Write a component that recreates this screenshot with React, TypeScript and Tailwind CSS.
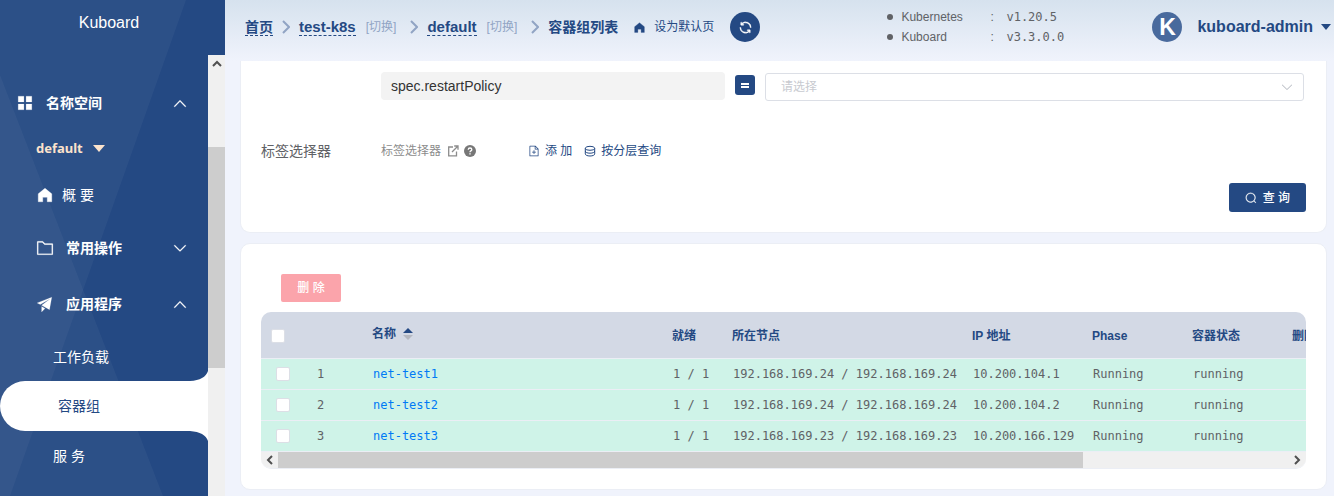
import React from "react";

const sans = "font-['Liberation_Sans','Noto_Sans_CJK_SC',sans-serif]";
const mono = "font-['DejaVu_Sans_Mono','Noto_Sans_CJK_SC',monospace]";

type IconProps = { d: string; className: string };

function Icon({ d, className }: IconProps) {
  return (
    <svg viewBox="0 0 1024 1024" fill="currentColor" aria-hidden="true" className={className}>
      <path d={d} />
    </svg>
  );
}

const paths = {
  home: "M512 128 128 447.936V896h255.936V640H640v256h255.936V447.936z",
  up: "m488.832 344.32-339.84 356.672a32 32 0 0 0 0 44.16l.384.384a29.44 29.44 0 0 0 42.688 0l320-335.872 319.872 335.872a29.44 29.44 0 0 0 42.688 0l.384-.384a32 32 0 0 0 0-44.16L535.168 344.32a32 32 0 0 0-46.336 0z",
  down: "M831.872 340.864 512 652.672 192.128 340.864a30.592 30.592 0 0 0-42.752 0 29.12 29.12 0 0 0 0 41.6L489.664 714.24a32 32 0 0 0 44.672 0l340.288-331.712a29.12 29.12 0 0 0 0-41.728 30.592 30.592 0 0 0-42.752 0z",
  menu: "M125 125h325v325H125zM574 125h325v325H574zM125 574h325v325H125zM574 574h325v325H574z",
  plane: "m64 448 832-320-128 704-446.08-243.328L832 192 242.816 545.472zm256 512V657.024L512 768z",
  folder:
    "M128 192v640h768V320H485.76L357.504 192zm-32-64h287.872l128.384 128H928a32 32 0 0 1 32 32v576a32 32 0 0 1-32 32H96a32 32 0 0 1-32-32V160a32 32 0 0 1 32-32z",
  refresh:
    "M771.776 794.88A384 384 0 0 1 128 512h64a320 320 0 0 0 555.712 216.448H654.72a32 32 0 1 1 0-64h149.056a32 32 0 0 1 32 32v148.928a32 32 0 1 1-64 0v-50.56zM276.288 295.616h92.992a32 32 0 0 1 0 64H220.16a32 32 0 0 1-32-32V178.56a32 32 0 0 1 64 0v50.56A384 384 0 0 1 896.128 512h-64a320 320 0 0 0-555.776-216.384z",
  search:
    "m795.904 750.72 124.992 124.928a32 32 0 0 1-45.248 45.248L750.656 795.904a416 416 0 1 1 45.248-45.248zM480 832a352 352 0 1 0 0-704 352 352 0 0 0 0 704z",
  docAdd:
    "M832 384H576V128H192v768h640zm-26.496-64L640 154.496V320zM160 64h480l256 256v608a32 32 0 0 1-32 32H160a32 32 0 0 1-32-32V96a32 32 0 0 1 32-32zm320 512V448h64v128h128v64H544v128h-64V640H352v-64z",
};

function SideGroup({ icon, label, open, className }: { icon: string; label: string; open: boolean; className: string }) {
  return (
    <button type="button" className={`flex w-full shrink-0 items-center pr-5 text-left text-sm font-bold ${className}`}>
      <Icon d={icon} className="mr-3 size-[18px] stroke-current stroke-[10]" />
      <span className="flex-1">{label}</span>
      <Icon d={open ? paths.up : paths.down} className="size-4 stroke-current stroke-[20]" />
    </button>
  );
}

function Sidebar() {
  return (
    <aside className="relative flex w-[225px] shrink-0 flex-col overflow-hidden bg-[#244983] text-white">
      <svg className="absolute top-0 left-0 h-[496px] w-[225px]" viewBox="0 0 225 496" aria-hidden="true">
        <path d="M0 0H186L10 496H0Z" fill="#fff" fillOpacity=".04" />
        <path d="M0 75L163 496H0Z" fill="#fff" fillOpacity=".04" />
      </svg>
      <div className="relative flex h-[55px] shrink-0 justify-center pr-[7px] pt-[13px] text-base leading-5">Kuboard</div>
      <div className="relative flex min-h-0 flex-1">
        <nav className="flex min-w-0 flex-1 flex-col pt-[23px]">
          <SideGroup icon={paths.menu} label="名称空间" open className="h-[50px] pl-4" />
          <button
            type="button"
            className="flex h-[41px] shrink-0 items-center gap-[10px] pl-9 font-['Noto_Sans',sans-serif] text-[13px] font-bold text-[#fce3cc]"
          >
            default
            <svg viewBox="0 0 12 7" className="h-[7px] w-3" fill="currentColor" aria-hidden="true">
              <path d="M0 0H12L6 7Z" />
            </svg>
          </button>
          <a href="#overview" className="flex h-[51px] shrink-0 items-center gap-2 pl-9 text-sm">
            <Icon d={paths.home} className="size-[18px] stroke-current stroke-[20]" />概 要
          </a>
          <SideGroup icon={paths.folder} label="常用操作" open={false} className="h-14 pl-9" />
          <SideGroup icon={paths.plane} label="应用程序" open className="h-14 pl-9" />
          <a href="#workloads" className="flex h-[49px] shrink-0 items-center pl-[53px] text-sm">
            工作负载
          </a>
          <a
            href="#pods"
            className="relative flex h-[50px] shrink-0 items-center rounded-l-[25px] bg-white pl-[58px] text-sm text-[#244983]"
          >
            容器组
            <svg className="absolute right-0 -top-[10px] h-[10px] w-[18px]" viewBox="0 0 18 10" fill="#fff" aria-hidden="true">
              <path d="M18 0V10H0Q15 9 18 0Z" />
            </svg>
            <svg className="absolute right-0 -bottom-[10px] h-[10px] w-[18px]" viewBox="0 0 18 10" fill="#fff" aria-hidden="true">
              <path d="M18 10V0H0Q15 1 18 10Z" />
            </svg>
          </a>
          <a href="#services" className="flex h-[50px] shrink-0 items-center pl-[53px] text-sm">
            服 务
          </a>
        </nav>
        <div className="flex w-[17px] flex-col items-center bg-[#f0f0f0] text-[#505050]">
          <div className="flex h-[92px] shrink-0 justify-center pt-[5px]">
            <svg viewBox="0 0 10 7" className="h-[7px] w-[10px]" fill="none" stroke="currentColor" strokeWidth="2" aria-hidden="true">
              <path d="M1 6L5 2L9 6" />
            </svg>
          </div>
          <div className="h-[221px] w-full shrink-0 bg-[#cdcdcd]" />
        </div>
      </div>
    </aside>
  );
}

function Separator({ className }: { className: string }) {
  return (
    <svg viewBox="0 0 8 14" className={`h-[14px] w-2 shrink-0 text-[#91a4c4] ${className}`} fill="none" stroke="currentColor" strokeWidth="2" aria-hidden="true">
      <path d="M1 1L7 7L1 13" />
    </svg>
  );
}

const crumb = "border-b border-dashed border-[#244983] leading-4 font-bold";

function Header() {
  const versions = [
    ["Kubernetes", "v1.20.5"],
    ["Kuboard", "v3.3.0.0"],
  ];
  return (
    <header className="flex h-[61px] shrink-0 items-center bg-linear-to-b from-[#d6e2ee] to-[#f0f3fc] pb-[7px] pl-5 pr-[3px] whitespace-nowrap text-[#244983]">
      <nav className="flex items-center text-sm">
        <a href="#home" className={crumb}>首页</a>
        <Separator className="mx-[9px]" />
        <a href="#cluster" className={`${crumb} text-[15px]`}>test-k8s</a>
        <button type="button" className="ml-[10px] text-xs text-[#91a4c4]">[切换]</button>
        <Separator className="ml-[14px] mr-[9px]" />
        <a href="#namespace" className={`${crumb} text-[15px]`}>default</a>
        <button type="button" className="ml-[10px] text-xs text-[#91a4c4]">[切换]</button>
        <Separator className="ml-[14px] mr-[9px]" />
        <span className="font-bold">容器组列表</span>
      </nav>
      <button type="button" className="ml-[15px] flex items-center gap-2 text-xs">
        <Icon d={paths.home} className="size-[13px] stroke-current stroke-[20]" />
        设为默认页
      </button>
      <button type="button" aria-label="刷新" className="ml-4 flex size-[30px] items-center justify-center rounded-full bg-[#244983] text-white">
        <Icon d={paths.refresh} className="size-[15px] stroke-current stroke-[30]" />
      </button>
      <div className="ml-auto text-xs leading-5 text-[#606266]">
        {versions.map(([name, version]) => (
          <div key={name} className="flex items-center">
            <span className="mr-2 size-[6px] rounded-full bg-[#606266]" />
            <span className="w-[89px]">{name}</span>
            <span className="w-4">:</span>
            <span className={`w-[57px] ${mono}`}>{version}</span>
          </div>
        ))}
      </div>
      <button type="button" className="ml-[89px] flex items-center text-base font-bold">
        <span className="mr-[15px] flex size-[30px] items-center justify-center rounded-full bg-[#496a9d] text-[23px] text-white">K</span>
        kuboard-admin
        <svg viewBox="0 0 10 6" className="ml-2 h-[6px] w-[10px]" fill="currentColor" aria-hidden="true">
          <path d="M0 0H10L5 6Z" />
        </svg>
      </button>
    </header>
  );
}

function Filters() {
  return (
    <section className="rounded-b-[10px] border border-t-0 border-[#ebeef5] bg-white px-5 pt-[11px] pb-5">
      <div className="flex items-start pl-[120px]">
        <input
          aria-label="字段"
          readOnly
          value="spec.restartPolicy"
          className="h-7 w-[344px] rounded-sm bg-[#f3f3f3] px-[10px] text-sm text-[#333] outline-none"
        />
        <button type="button" aria-label="等于" className="mt-[3px] ml-[10px] flex size-5 items-center justify-center rounded-[3px] bg-[#244983] text-white">
          <svg viewBox="0 0 8 5" className="h-[5px] w-2" fill="currentColor" aria-hidden="true">
            <path d="M0 0H8V2H0ZM0 3H8V5H0Z" />
          </svg>
        </button>
        <div className="relative mt-px mr-[2px] ml-[10px] flex-1">
          <select aria-label="请选择" className="h-7 w-full appearance-none rounded-[3px] border border-[#dcdfe6] bg-white px-[15px] text-xs text-[#c8cad0] outline-none">
            <option>请选择</option>
          </select>
          <Icon d={paths.down} className="pointer-events-none absolute top-[7px] right-[10px] size-[14px] text-[#b4b8c0]" />
        </div>
      </div>
      <div className="mt-10 flex h-5 items-center text-xs text-[#244983]">
        <span className="w-[120px] text-sm text-[#606266]">标签选择器</span>
        <a href="#labels" className="flex w-[147px] items-center text-[#8c8c8c]">
          标签选择器
          <svg viewBox="0 0 12 12" className="ml-[6px] size-3" fill="none" stroke="currentColor" strokeWidth="1.3" aria-hidden="true">
            <path d="M6 2H1.7V10.8H9.5V6.5M7.2 1H11V4.8M11 1L5 7" />
          </svg>
          <svg viewBox="0 0 12 12" className="ml-[5px] size-3" aria-hidden="true">
            <circle cx="6" cy="6" r="6" fill="#777" />
            <path d="M4.2 4.7Q4.3 3 6 3Q7.8 3 7.8 4.5Q7.8 5.4 6.9 5.9Q6 6.4 6 7.2" fill="none" stroke="#fff" strokeWidth="1.3" />
            <path d="M5.3 8.2H6.7V9.6H5.3Z" fill="#fff" />
          </svg>
        </a>
        <button type="button" className="flex items-center gap-[5px]">
          <Icon d={paths.docAdd} className="size-3" />添 加
        </button>
        <button type="button" className="ml-3 flex items-center gap-[5px]">
          <svg viewBox="0 0 12 12" className="size-3" fill="none" stroke="currentColor" strokeWidth="1" aria-hidden="true">
            <ellipse cx="6" cy="3.3" rx="4.7" ry="2" />
            <path d="M1.3 3.3V8.9C1.3 10.1 3.2 11 6 11S10.7 10.1 10.7 8.9V3.3M1.3 6.1C1.3 7.3 3.2 8.2 6 8.2S10.7 7.3 10.7 6.1" />
          </svg>
          按分层查询
        </button>
      </div>
      <div className="mt-[22px] flex justify-end">
        <button type="button" className="flex h-[29px] items-center gap-[6px] rounded-[3px] bg-[#244983] px-4 text-xs font-medium text-white">
          <Icon d={paths.search} className="size-3 stroke-current stroke-[20]" />查 询
        </button>
      </div>
    </section>
  );
}

const rows = [
  { id: 1, name: "net-test1", ready: "1 / 1", node: "192.168.169.24 / 192.168.169.24", ip: "10.200.104.1" },
  { id: 2, name: "net-test2", ready: "1 / 1", node: "192.168.169.24 / 192.168.169.24", ip: "10.200.104.2" },
  { id: 3, name: "net-test3", ready: "1 / 1", node: "192.168.169.23 / 192.168.169.23", ip: "10.200.166.129" },
];

const box = "block size-[14px] appearance-none rounded-[2px] border border-[#dcdfe6] bg-white checked:bg-[#244983]";

function PodTable() {
  return (
    <div className="mt-[10px] overflow-hidden rounded-[10px] border-b border-[#ebeef5]">
      <div className="overflow-hidden">
        <table className="w-[1312px] table-fixed border-collapse text-left text-xs whitespace-nowrap">
          <colgroup>
            <col className="w-[45px]" />
            <col className="w-[56px]" />
            <col className="w-[300px]" />
            <col className="w-[60px]" />
            <col className="w-[240px]" />
            <col className="w-[120px]" />
            <col className="w-[100px]" />
            <col className="w-[100px]" />
            <col />
          </colgroup>
          <thead className="bg-[#d3d9e5] text-[#244983]">
            <tr className="h-[46px] border-b border-[#ebeef5]">
              <th className="pt-[2px] pl-[10px]">
                <input type="checkbox" aria-label="全选" className={box} />
              </th>
              <th></th>
              <th className="px-[10px] pb-[2px]" aria-sort="ascending">
                <span className="flex items-center gap-[7px]">
                  名称
                  <svg viewBox="0 0 10 12" className="h-3 w-[10px]" aria-hidden="true">
                    <path d="M0 5L5 0L10 5Z" fill="#244983" />
                    <path d="M0 7H10L5 12Z" fill="#b4b7bf" />
                  </svg>
                </span>
              </th>
              <th className="px-[10px] pt-[2px]">就绪</th>
              <th className="px-[10px] pt-[2px]">所在节点</th>
              <th className="px-[10px] pt-[2px]">IP 地址</th>
              <th className="px-[10px] pt-[2px]">Phase</th>
              <th className="px-[10px] pt-[2px]">容器状态</th>
              <th className="px-[10px] pt-[2px]">删除</th>
            </tr>
          </thead>
          <tbody className={`bg-[#cff3e8] text-[#606266] ${mono}`}>
            {rows.map((row) => (
              <tr key={row.id} className="h-[31px] border-b border-[#ebeef5]">
                <td className="pl-[15px]">
                  <input type="checkbox" aria-label={row.name} className={box} />
                </td>
                <td className="pl-[11px]">{row.id}</td>
                <td className="px-[11px]">
                  <a href={`#${row.name}`} className="text-[#007af5]">{row.name}</a>
                </td>
                <td className="px-[11px]">{row.ready}</td>
                <td className="px-[11px]">{row.node}</td>
                <td className="px-[11px]">{row.ip}</td>
                <td className="px-[11px]">Running</td>
                <td className="px-[11px]">running</td>
                <td></td>
              </tr>
            ))}
          </tbody>
        </table>
      </div>
      <div className="flex h-4 items-center justify-between bg-[#f0f0f0] text-[#505050]">
        <div className="flex w-[17px] shrink-0 justify-center">
          <svg viewBox="0 0 7 10" className="h-[10px] w-[7px]" fill="none" stroke="currentColor" strokeWidth="2" aria-hidden="true">
            <path d="M6 1L2 5L6 9" />
          </svg>
        </div>
        <div className="h-full flex-1">
          <div className="h-full w-[79.6%] bg-[#cdcdcd]" />
        </div>
        <div className="flex w-[17px] shrink-0 justify-center">
          <svg viewBox="0 0 7 10" className="h-[10px] w-[7px]" fill="none" stroke="currentColor" strokeWidth="2" aria-hidden="true">
            <path d="M1 1L5 5L1 9" />
          </svg>
        </div>
      </div>
    </div>
  );
}

export default function App() {
  return (
    <div className={`flex h-screen overflow-hidden bg-[#f0f3fc] ${sans}`}>
      <Sidebar />
      <div className="flex min-w-0 flex-1 flex-col">
        <Header />
        <main className="flex min-h-0 flex-1 flex-col gap-[10px] pr-[7px] pl-[15px]">
          <Filters />
          <section className="rounded-[10px] border border-[#ebeef5] bg-white px-5 pt-[30px] pb-5">
            <button type="button" disabled className="ml-5 block h-7 w-[60px] rounded-[2px] bg-[#fba4ab] text-xs font-medium text-white">
              删 除
            </button>
            <PodTable />
          </section>
        </main>
      </div>
    </div>
  );
}
